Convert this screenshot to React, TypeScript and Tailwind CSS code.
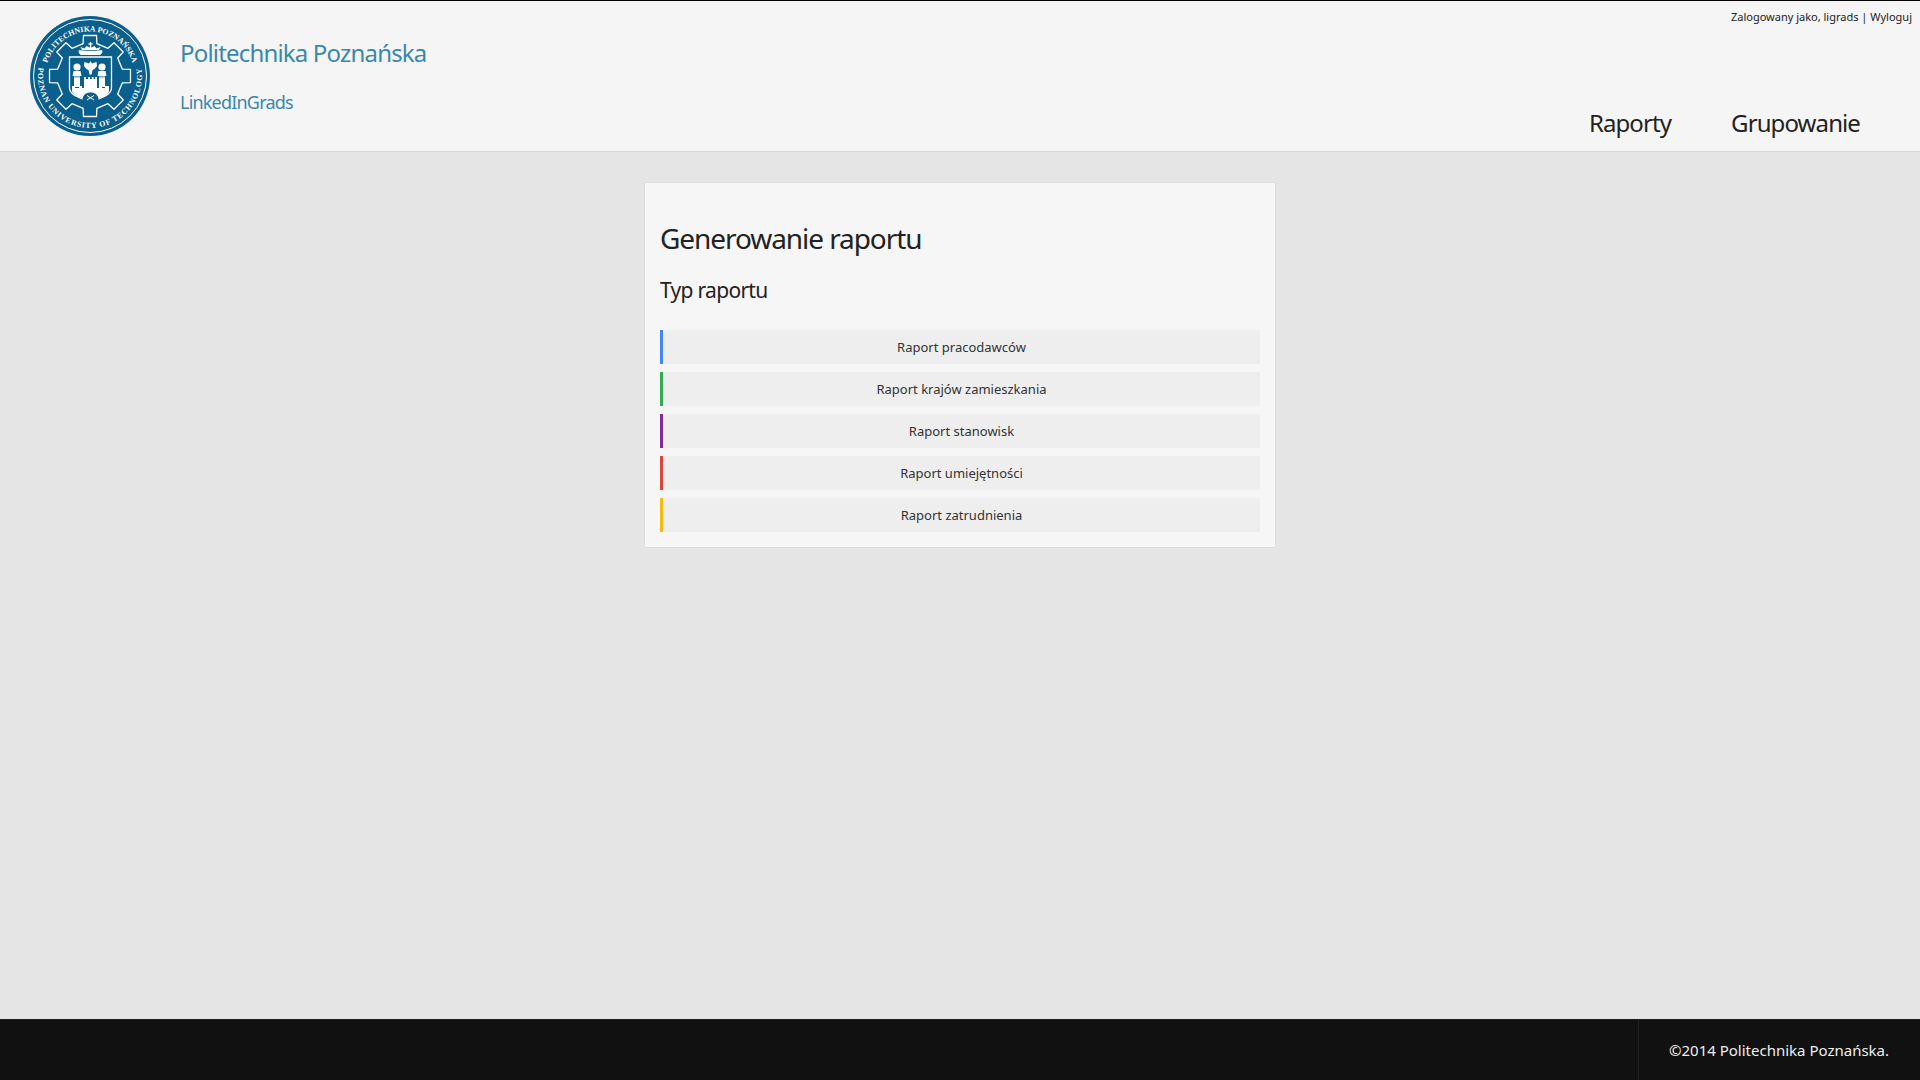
import React from "react";

const gearPath = (() => {
  const cx = 60, cy = 60, ro = 41, ri = 33, teeth = 8;
  const pts: string[] = [];
  for (let i = 0; i < teeth; i++) {
    const a = (i * 2 * Math.PI) / teeth - Math.PI / 2;
    const w = 0.16, w2 = 0.21;
    const p = (r: number, t: number) => `${(cx + r * Math.cos(t)).toFixed(2)} ${(cy + r * Math.sin(t)).toFixed(2)}`;
    pts.push(p(ri, a - w2), p(ro, a - w), p(ro, a + w), p(ri, a + w2));
  }
  return "M" + pts.join("L") + "Z";
})();

function Logo() {
  const serif = { fontFamily: '"Liberation Serif", serif' };
  return (
    <svg width="120" height="120" viewBox="0 0 120 120" className="shrink-0">
      <defs>
        <path id="arcTop" d="M 18.2 75.2 A 44.5 44.5 0 1 1 101.8 75.2" />
        <path id="arcBottom" d="M 11.1 42.2 A 52 52 0 1 0 108.9 42.2" />
      </defs>
      <circle cx="60" cy="60" r="60" fill="#0a5f8c" />
      <circle cx="60" cy="60" r="56.5" fill="none" stroke="#ffffff" strokeWidth="1" />
      <text fontSize="7.8" fontWeight="700" fill="#ffffff" style={serif} letterSpacing="0.05">
        <textPath href="#arcTop" startOffset="50%" textAnchor="middle">POLITECHNIKA POZNAŃSKA</textPath>
      </text>
      <text fontSize="7.8" fontWeight="700" fill="#ffffff" style={serif} letterSpacing="0.8">
        <textPath href="#arcBottom" startOffset="50%" textAnchor="middle">POZNAN UNIVERSITY OF TECHNOLOGY</textPath>
      </text>
      <path d={gearPath} fill="#0a5f8c" stroke="#ffffff" strokeWidth="1.3" strokeLinejoin="round" />
      {/* shield */}
      <path d="M39.5 41H81.5V72C81.5 79 71 82 60.5 86C50 82 39.5 79 39.5 72Z" fill="#0a5f8c" stroke="#ffffff" strokeWidth="1.3" />
      {/* city wall */}
      <path d="M42 75V70H45V72H49V70H52V72H69V70H72V72H75V70H79V75C78 80 69 82 60.5 85C52 82 43 80 42 75Z" fill="#ffffff" />
      <path d="M52.5 85C52 79 56 76.5 60.5 76.5C65 76.5 69 79 68.5 85L60.5 87Z" fill="#0a5f8c" />
      <path d="M57 79.5L64 84M64 79.5L57 84" stroke="#ffffff" strokeWidth="1" />
      {/* tower */}
      <path d="M54 61H55.8V63H58.2V61H60V63H61.8V61H63.6V63H65.2V61H67V73H54Z" fill="#ffffff" />
      {/* eagle */}
      <path d="M60.5 45L62 47.5L66.5 46L67 50L64.5 53L62.5 54L61.5 58.5H59.5L58.5 54L56.5 53L54 50L54.5 46L59 47.5Z" fill="#ffffff" />
      {/* left saint */}
      <circle cx="47" cy="51" r="3.6" fill="#ffffff" />
      <path d="M43.5 55H50.5L51.5 60H50V71H44V60H42.5Z" fill="#ffffff" />
      <rect x="44" y="60.5" width="6" height="0.8" fill="#0a5f8c" />
      {/* right saint */}
      <circle cx="72" cy="51" r="3.6" fill="#ffffff" />
      <path d="M68.5 55H75.5L76.5 60H75V71H69V60H67.5Z" fill="#ffffff" />
      <rect x="69" y="60.5" width="6" height="0.8" fill="#0a5f8c" />
      {/* crown */}
      <path d="M49 34C52 35 69 35 72 34C73 36 72 38 70 39H51C49 38 48 36 49 34Z" fill="#ffffff" />
      <path d="M52 34L50.5 31L54.5 32.5L56.5 30L60.5 32L64.5 30L66.5 32.5L70.5 31L69 34Z" fill="#ffffff" />
      <rect x="59.8" y="26" width="1.4" height="6" fill="#ffffff" />
      <rect x="58.3" y="27.4" width="4.4" height="1.2" fill="#ffffff" />
    </svg>
  );
}

const reports = [
  { label: "Raport pracodawców", color: "border-l-[#4285f4]" },
  { label: "Raport krajów zamieszkania", color: "border-l-[#34a853]" },
  { label: "Raport stanowisk", color: "border-l-[#7b2d9e]" },
  { label: "Raport umiejętności", color: "border-l-[#d8473a]" },
  { label: "Raport zatrudnienia", color: "border-l-[#f4b912]" },
];

export default function App() {
  return (
    <div
      className="h-screen flex flex-col bg-[#e5e5e5] overflow-hidden"
      style={{ fontFamily: '"Noto Sans", "Open Sans", sans-serif' }}
    >
      <header className="h-[152px] shrink-0 flex justify-between bg-[#f5f5f5] border-t border-t-black border-b border-b-[#d8d8d8]">
        <div className="flex items-start">
          <div className="pl-[30px] pt-[15px]">
            <Logo />
          </div>
          <div className="pl-[30px] text-[#3b87ac]">
            <div className="pt-[35px] text-[24px] leading-[33px] tracking-[-0.82px]">Politechnika Poznańska</div>
            <div className="pt-[21px] text-[18px] leading-[24px] tracking-[-0.8px]">LinkedInGrads</div>
          </div>
        </div>
        <div className="flex flex-col items-end justify-between">
          <div className="pt-[8px] pr-[8px] text-[11px] leading-[15px] text-[#222222]">
            Zalogowany jako, ligrads | Wyloguj
          </div>
          <nav className="flex gap-[60px] pr-[60px] pb-[12px] text-[24px] leading-[33px] tracking-[-0.9px] text-[#222222]">
            <span>Raporty</span>
            <span>Grupowanie</span>
          </nav>
        </div>
      </header>

      <main className="flex-1 flex justify-center items-start pt-[30px]">
        <div className="w-[632px] h-[366px] bg-[#f6f6f6] border border-[#dcdcdc] px-[15px] pt-[36px] text-[#222222]">
          <h1 className="text-[28px] leading-[38px] tracking-[-1.07px]">Generowanie raportu</h1>
          <h2 className="pt-[19px] text-[21px] leading-[29px] tracking-[-0.7px]">Typ raportu</h2>
          <div className="pt-[25px] flex flex-col gap-[8px]">
            {reports.map((r) => (
              <div
                key={r.label}
                className={`h-[34px] flex items-center justify-center bg-[#eeeeee] border-l-[3px] pt-[2px] text-[13px] text-[#333333] ${r.color}`}
              >
                {r.label}
              </div>
            ))}
          </div>
        </div>
      </main>

      <footer className="h-[61px] shrink-0 flex justify-end bg-[#111111] border-t border-t-[#1e1e1e]">
        <div className="w-[282px] flex items-center pl-[30px] border-l border-l-[#222222] text-[15px] text-[#eeeeee]">
          ©2014 Politechnika Poznańska.
        </div>
      </footer>
    </div>
  );
}
